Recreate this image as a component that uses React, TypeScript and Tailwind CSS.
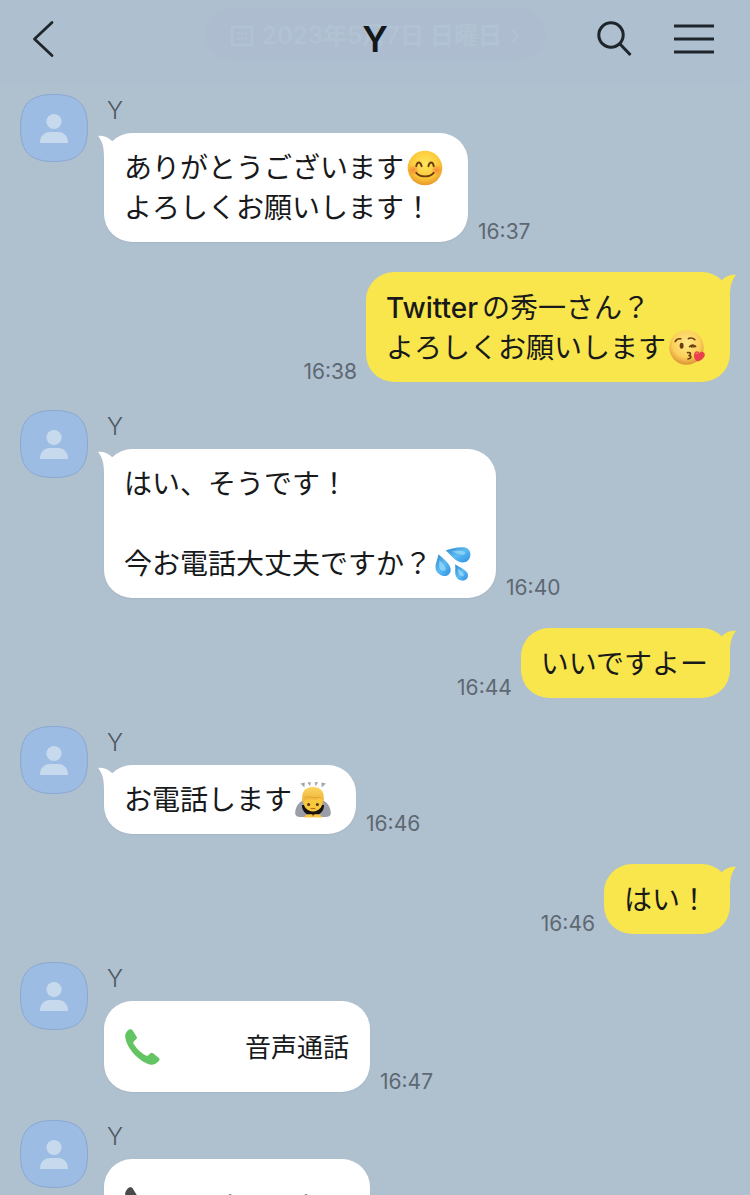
import React from "react";

type EmojiName = "smile" | "kiss" | "sweat" | "bow";

interface Message {
  from: "them" | "me";
  time: string;
  lines?: React.ReactNode[];
  emoji?: EmojiName;
  emojiLine?: number;
  call?: "answered" | "cancelled";
  label?: string;
}

const messages: Message[] = [
  { from: "them", time: "16:37", lines: ["ありがとうございます", "よろしくお願いします！"], emoji: "smile", emojiLine: 0 },
  {
    from: "me",
    time: "16:38",
    lines: [<><span className="pr-1 font-medium">Twitter</span>の秀一さん？</>, "よろしくお願いします"],
    emoji: "kiss",
    emojiLine: 1,
  },
  { from: "them", time: "16:40", lines: ["はい、そうです！", "", "今お電話大丈夫ですか？"], emoji: "sweat", emojiLine: 2 },
  { from: "me", time: "16:44", lines: ["いいですよー"] },
  { from: "them", time: "16:46", lines: ["お電話します"], emoji: "bow", emojiLine: 0 },
  { from: "me", time: "16:46", lines: ["はい！"] },
  { from: "them", time: "16:47", call: "answered", label: "音声通話" },
  { from: "them", time: "16:47", call: "cancelled", label: "キャンセル" },
];

function SmileEmoji() {
  return (
    <svg viewBox="0 0 36 36" className="size-9" role="img" aria-label="笑顔">
      <defs>
        <radialGradient id="smile-face" cx="50%" cy="38%" r="62%">
          <stop offset="0" stopColor="#ffe65c" />
          <stop offset="0.65" stopColor="#fdc93a" />
          <stop offset="1" stopColor="#e8982a" />
        </radialGradient>
        <radialGradient id="smile-cheek">
          <stop offset="0" stopColor="#f4723a" stopOpacity="0.75" />
          <stop offset="1" stopColor="#f4723a" stopOpacity="0" />
        </radialGradient>
      </defs>
      <circle cx="18" cy="18" r="17.3" fill="url(#smile-face)" />
      <circle cx="6.5" cy="20" r="5.5" fill="url(#smile-cheek)" />
      <circle cx="29.5" cy="20" r="5.5" fill="url(#smile-cheek)" />
      <g fill="none" stroke="#6b3d10" strokeWidth="1.9" strokeLinecap="round">
        <path d="M9.3 16.2C10 11.2 13.6 11.2 14.6 16.2" />
        <path d="M21.4 16.2C22.4 11.2 26 11.2 26.7 16.2" />
        <path d="M9.3 22.8C13.5 27.6 22.5 27.6 26.7 22.8" />
      </g>
    </svg>
  );
}

function KissEmoji() {
  return (
    <svg viewBox="0 0 36 36" className="size-9" role="img" aria-label="投げキッス">
      <defs>
        <radialGradient id="kiss-face" cx="50%" cy="38%" r="62%">
          <stop offset="0" stopColor="#ffe98a" />
          <stop offset="0.65" stopColor="#fbd05a" />
          <stop offset="1" stopColor="#dc9434" />
        </radialGradient>
      </defs>
      <circle cx="17.5" cy="17.5" r="17.2" fill="url(#kiss-face)" />
      <ellipse cx="12.6" cy="15.8" rx="2" ry="3" fill="#6b3d10" />
      <g fill="none" stroke="#6b3d10" strokeWidth="1.6" strokeLinecap="round" strokeLinejoin="round">
        <path d="M6.2 11.6C7.4 9.3 9.4 8.4 11.8 8.8" />
        <path d="M19.4 8.6C21.8 7.6 24 8 25.8 9.6" />
        <path d="M20.6 16.6C22.4 14.8 24.8 14.8 26.6 16.4L22.6 17" />
        <path d="M18.6 22.6C21.4 22.2 22.8 23.8 20 25.6C23 25.8 22.4 28.6 19 29" />
      </g>
      <path
        d="M28.8 31.6C25.6 30.4 24.4 26.2 25.4 23.4C26.2 20.8 29.4 20.6 30.4 23.2C32 20.8 35.6 21.8 35.8 24.6C36 27.6 32 30.6 28.8 31.6Z"
        fill="#e8404c"
      />
      <path d="M27 23.6C27.6 22.6 28.6 22.6 29 23.4" fill="none" stroke="#f98a8e" strokeLinecap="round" />
    </svg>
  );
}

function SweatEmoji() {
  return (
    <svg viewBox="0 0 36 36" className="size-9" role="img" aria-label="汗">
      <defs>
        <linearGradient id="sweat-drop" x1="0" y1="0" x2="1" y2="1">
          <stop offset="0" stopColor="#2f86c9" />
          <stop offset="0.5" stopColor="#5cbcf3" />
          <stop offset="1" stopColor="#2e8fe0" />
        </linearGradient>
      </defs>
      <g fill="url(#sweat-drop)">
        <path d="M10.6 4.4C17 2.2 25 0.2 30.4 1.6C36.4 3.2 37 11.4 32.4 15C28.4 18 22.6 15.8 18.6 12.2C15.8 9.6 13.6 6.8 10.6 4.4Z" />
        <path d="M3.4 8.2C7.6 12 14.6 17 15.6 22.4C16.6 28 11.6 31 7.4 29.8C2.2 28.4 0 23.8 0.6 19.6C1.2 15.8 2.8 12.2 3.4 8.2Z" />
        <path d="M20 18.4C24 20.6 30.4 23 32.4 27C34.4 31.4 31 35 27 34.6C22.6 34.2 20.2 30.4 20.2 26.2C20.2 23.4 20.6 21 20 18.4Z" />
      </g>
      <g fill="#a9e2ff" opacity="0.6">
        <path d="M17 5.8C21 4.6 26 4 29 5.4C31.6 6.8 30 9 27 8.8C23.4 8.6 20.4 6.6 17 5.8Z" />
        <path d="M4.6 14C7 17 10.4 19.6 10.8 22.6C11 25.2 7.6 25.6 5.6 23.6C3.4 21.4 4.2 17.4 4.6 14Z" />
        <path d="M22.6 22.6C25 24.4 28 26 28.8 28.2C29.4 30.4 27 30.8 25.2 29.6C23.2 28.2 23 25 22.6 22.6Z" />
      </g>
    </svg>
  );
}

function BowEmoji() {
  return (
    <svg viewBox="0 0 36 36" className="size-9" role="img" aria-label="お辞儀">
      <defs>
        <linearGradient id="bow-hair" x1="0" y1="0" x2="0" y2="1">
          <stop offset="0" stopColor="#fbd65f" />
          <stop offset="1" stopColor="#eeb035" />
        </linearGradient>
      </defs>
      <path d="M5.4 1.4L9.8 0.4L9.4 5.4Z M12.4 0.2H16L15 4.2Z M19.6 0.2H23.2L20.6 4.2Z M26.4 0.4L31 1.4L26.6 5.4Z" fill="#a3a7ab" />
      <path d="M9 18C3.6 20 0.4 25 0.2 31C0.2 34.4 3 35.4 8 35H28C33 35.4 35.8 34.4 35.8 31C35.6 25 32.4 20 27 18Z" fill="#9b9ea8" />
      <path d="M7 23C7 30 11.4 33.4 18 33.4C24.6 33.4 29 30 29 23Z" fill="#14110e" />
      <path d="M8 17C8 25 12 29.4 18 29.4C24 29.4 28 25 28 17Z" fill="#f8c83f" />
      <path d="M7.4 20.4C6 10 9.6 5 18 5C26.6 5 30 10 28.6 20.4C27.4 17.4 25.6 16.2 22 17.2C16.6 18.6 10.6 15.4 7.4 20.4Z" fill="url(#bow-hair)" />
      <path d="M9.6 15.8C14 12.8 19 17.4 25.6 15.4" fill="none" stroke="#dc9c28" strokeWidth="0.8" />
      <circle cx="13.6" cy="22.6" r="1.5" fill="#5a3410" />
      <circle cx="22.4" cy="22.6" r="1.5" fill="#5a3410" />
      <path d="M16 26.6H20" stroke="#a46c1c" strokeLinecap="round" />
      <path d="M9.4 35.6C9.4 32.8 13 31.4 17.6 32.6V35.6Z M27 35.6C27 32.8 23.4 31.4 18.6 32.6V35.6Z" fill="#fbc63c" />
    </svg>
  );
}

const emojis: Record<EmojiName, () => React.JSX.Element> = {
  smile: SmileEmoji,
  kiss: KissEmoji,
  sweat: SweatEmoji,
  bow: BowEmoji,
};

function Avatar() {
  return (
    <svg viewBox="0 0 68 68" className="size-[68px] shrink-0" aria-hidden="true">
      <path
        d="M34 0.5C58 0.5 67.5 10 67.5 34C67.5 58 58 67.5 34 67.5C10 67.5 0.5 58 0.5 34C0.5 10 10 0.5 34 0.5Z"
        fill="#9dbce3"
        stroke="#87a8d0"
      />
      <circle cx="34" cy="27.5" r="7.6" fill="#c7d9ed" />
      <path d="M20 49C20 42 24 38 30 38H38C44 38 48 42 48 49Z" fill="#c7d9ed" />
    </svg>
  );
}

function PhoneIcon({ className = "" }: { className?: string }) {
  return (
    <svg viewBox="0 0 103 107" className={`h-9 w-[35px] ${className}`} fill="currentColor" aria-hidden="true">
      <path d="M0 22C0 12 8 2 14 1C18 0 20 1 22 4L34 23C36 26 35 28 33 30L25 38C23 41 24 43 27 47C36 61 50 74 62 79C65 80 67 80 69 78L75 72C78 70 80 70 83 72L100 86C103 89 103 92 100 95C94 103 84 107 76 106C48 100 4 62 0 22Z" />
    </svg>
  );
}

function Tail({ side }: { side: "left" | "right" }) {
  return (
    <svg
      viewBox="0 0 20 28"
      className={[
        "absolute top-0.5 h-7 w-5",
        side === "left" ? "-left-1.5 text-white" : "-right-1.5 -scale-x-100 text-[#f9e54c]",
      ].join(" ")}
      fill="currentColor"
      aria-hidden="true"
    >
      <path d="M0 0.8C5.4 0.4 10 2 13.4 5.6L20 12L16 26L6 27C6.2 15 5.6 8 0 0.8Z" />
    </svg>
  );
}

function Bubble({ message }: { message: Message }) {
  const mine = message.from === "me";
  const Emoji = message.emoji ? emojis[message.emoji] : null;

  if (message.call) {
    return (
      <button
        type="button"
        className="flex h-[91px] w-[266px] items-center justify-between rounded-[28px] bg-white pr-[21px] pl-[21px] shadow-xs"
      >
        <PhoneIcon className={message.call === "answered" ? "text-[#62c463]" : "text-[#4a4a4a]"} />
        <span className="pt-[3px] text-[26px] leading-10">{message.label}</span>
      </button>
    );
  }

  return (
    <div
      className={[
        "relative rounded-[28px] pr-[22px] pl-5 pb-[14px] text-[28px] leading-10",
        mine ? "bg-[#f9e54c] pt-4" : "bg-white pt-[15px] shadow-xs",
      ].join(" ")}
    >
      <Tail side={mine ? "right" : "left"} />
      {message.lines?.map((line, i) => (
        <p key={i} className="flex h-10 items-center whitespace-nowrap">
          {line}
          {Emoji && message.emojiLine === i && (
            <span className="flex w-[42px] justify-center">
              <Emoji />
            </span>
          )}
        </p>
      ))}
    </div>
  );
}

function MessageRow({ message }: { message: Message }) {
  const time = <time className="text-[21px] leading-5 text-[#5d6872]">{message.time}</time>;

  if (message.from === "me") {
    return (
      <li className="mt-[30px] flex items-end justify-end gap-[9px] pr-5">
        {time}
        <Bubble message={message} />
      </li>
    );
  }

  return (
    <li className="mt-7 flex items-start gap-4 pl-5 first:mt-0">
      <Avatar />
      <div>
        <p className="h-[39px] pl-[3px] text-2xl leading-[34px] font-light text-[#4d5862]">Y</p>
        <div className="flex items-end gap-2.5">
          <Bubble message={message} />
          {time}
        </div>
      </div>
    </li>
  );
}

function Header() {
  return (
    <header className="relative flex h-[84px] shrink-0 items-center bg-[#aebfd0] pb-1.5 text-[#1e252b]">
      <div className="absolute inset-x-0 top-2 flex justify-center" aria-hidden="true">
        <div className="flex h-[52px] w-[340px] items-center gap-2 rounded-full bg-[#adbdcf] pt-1 pl-[25px] text-2xl font-semibold whitespace-nowrap text-[#b1c3d3]">
          <svg viewBox="0 0 24 24" className="size-6" fill="none" stroke="currentColor" strokeWidth="2.5">
            <rect x="2" y="3" width="20" height="18" rx="2" />
            <path d="M7 9.5h10M7 14.5h10" strokeDasharray="2.5 1.5" />
          </svg>
          <span>2023年5月7日 日曜日</span>
          <svg viewBox="0 0 10 16" className="h-4 w-2.5" fill="none" stroke="currentColor" strokeWidth="2">
            <path d="M2 2l6 6-6 6" />
          </svg>
        </div>
      </div>
      <div className="relative flex flex-1 pr-1 pl-8">
        <button type="button" aria-label="戻る">
          <svg viewBox="0 0 24 40" className="h-10 w-6" fill="none" stroke="currentColor" strokeWidth="2.8" strokeLinecap="round" strokeLinejoin="round">
            <path d="M20 3.5L2.5 20L20 36.5" />
          </svg>
        </button>
      </div>
      <h1 className="relative text-4xl font-semibold text-[#15181b]">Y</h1>
      <div className="relative flex flex-1 items-center justify-end gap-10 pr-9">
        <button type="button" aria-label="検索">
          <svg viewBox="0 0 38 38" className="size-[38px]" fill="none" stroke="currentColor" strokeWidth="3">
            <circle cx="15" cy="15" r="12.2" />
            <path d="M23.5 23.5L34.5 35" />
          </svg>
        </button>
        <button type="button" aria-label="メニュー">
          <svg viewBox="0 0 40 30" className="h-[30px] w-10" stroke="currentColor" strokeWidth="3">
            <path d="M0 2h40M0 15h40M0 28h40" />
          </svg>
        </button>
      </div>
    </header>
  );
}

export default function App() {
  return (
    <div className="flex h-screen flex-col overflow-hidden bg-[#afc0cf] font-[Inter,'Noto_Sans_CJK_JP',sans-serif] text-[#17191b]">
      <Header />
      <main className="min-h-0 flex-1 overflow-hidden pt-2.5">
        <ol>
          {messages.map((message, i) => (
            <MessageRow key={i} message={message} />
          ))}
        </ol>
      </main>
    </div>
  );
}
